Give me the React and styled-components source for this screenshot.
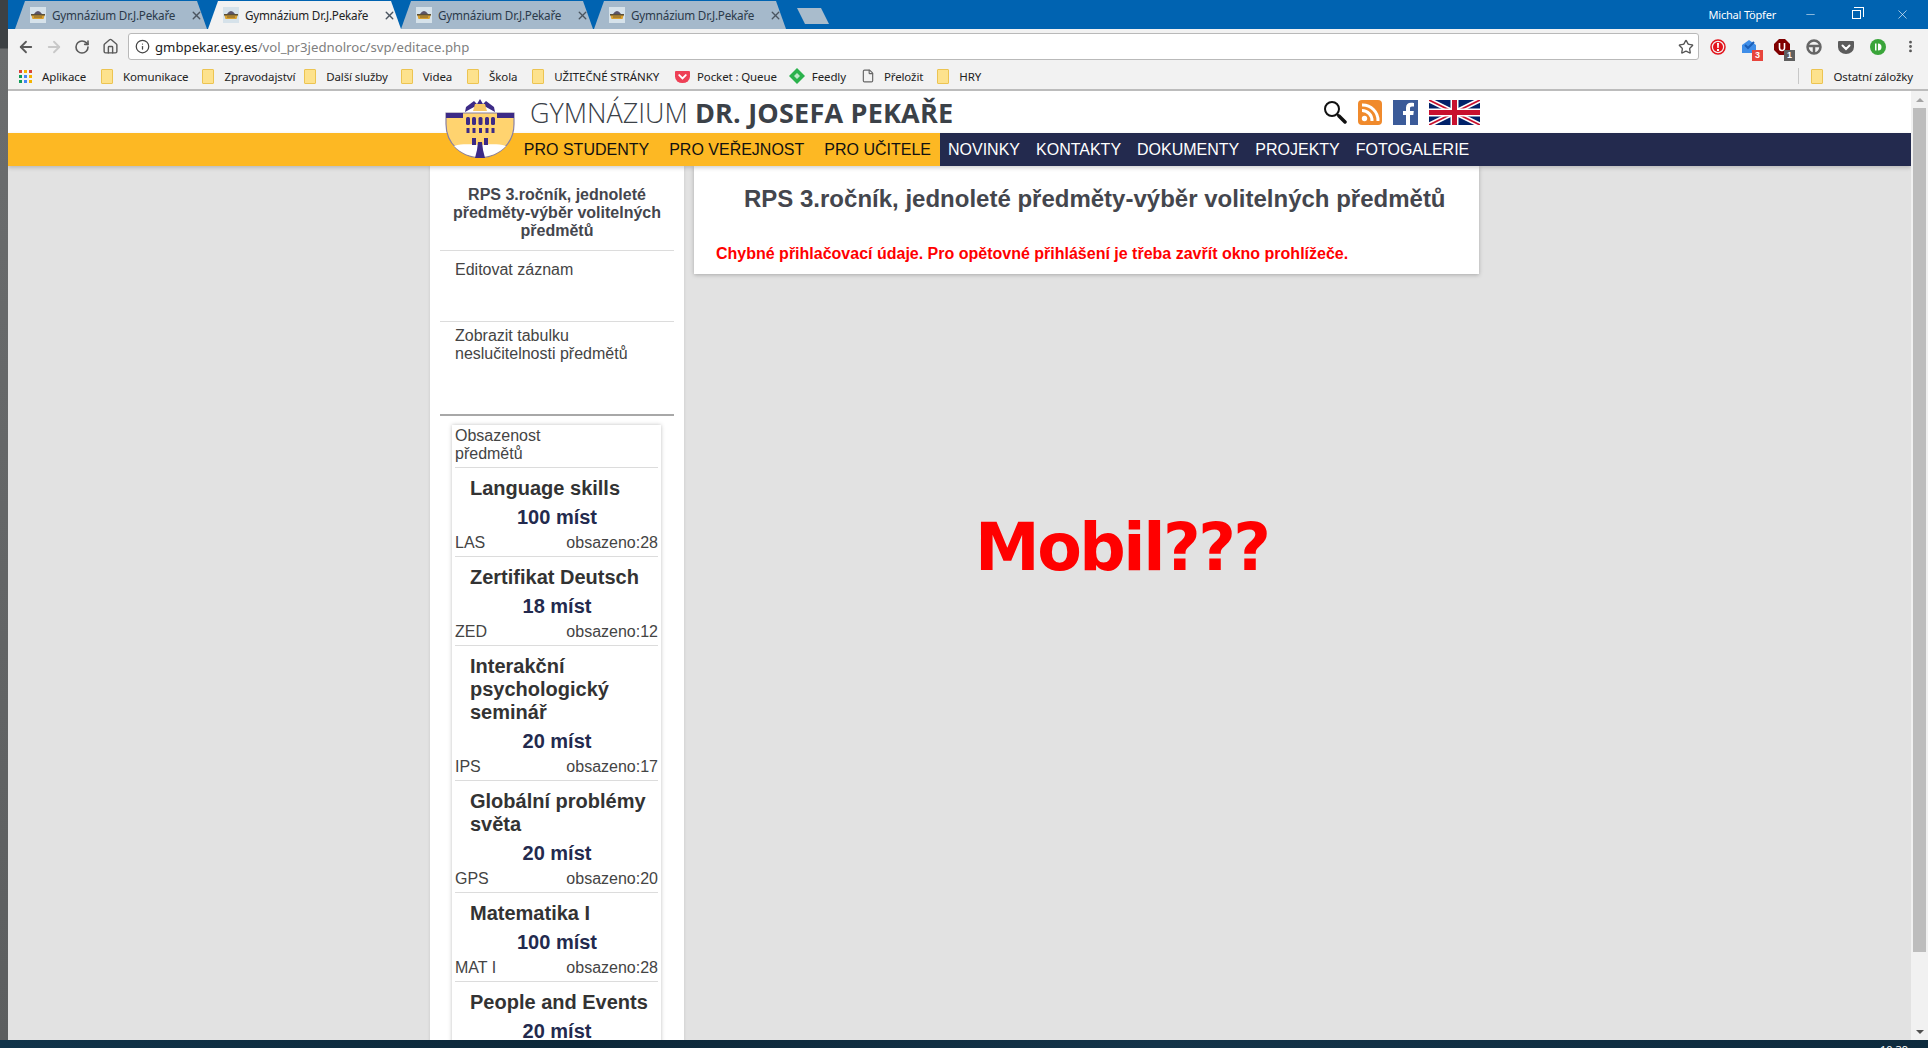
import React from "react";
import styled, { createGlobalStyle } from "styled-components";
import {
  ArrowLeft,
  ArrowRight,
  RotateCw,
  Home,
  Info,
  Star,
  X,
  Minus,
  MoreVertical,
  File,
} from "lucide-react";

const GlobalStyle = createGlobalStyle`
  html, body {
    margin: 0;
    padding: 0;
    height: 100%;
    overflow: hidden;
    background: #0d2a3d;
  }
  * { box-sizing: border-box; }
`;

const Desktop = styled.div`
  width: 1928px;
  height: 1048px;
  display: flex;
  flex-direction: column;
  overflow: hidden;
`;

const WindowRow = styled.div`
  height: 1040px;
  display: flex;
`;

const LeftStrip = styled.div`
  width: 8px;
  background: linear-gradient(#3d4144 0, #3d4144 48px, #6b6d6e 49px, #5c5e5f 100%);
`;

const BrowserWindow = styled.div`
  flex: 1;
  min-width: 0;
  display: flex;
  flex-direction: column;
`;

const TitleBar = styled.div`
  height: 29px;
  background: #0063b1;
  display: flex;
  align-items: flex-end;
  padding-left: 7px;
`;

const Tabs = styled.div`
  display: flex;
  flex: 1;
  align-items: flex-end;
`;

const Tab = styled.div`
  position: relative;
  width: 193px;
  height: 28px;
  display: flex;
  align-items: center;
  padding: 0 5px 0 15px;
  font: 11.7px "Noto Sans", sans-serif;
  color: ${(p) => (p.$active ? "#222" : "#2b3a4a")};
  z-index: ${(p) => (p.$active ? 2 : 1)};
  &::before {
    content: "";
    position: absolute;
    inset: 0 ${(p) => (p.$active ? "0" : "1px")} 0 0;
    background: ${(p) => (p.$active ? "#f2f2f2" : "#a5b9cb")};
    clip-path: polygon(0 100%, 10px 0, calc(100% - 10px) 0, 100% 100%);
    z-index: -1;
  }
`;

const TabTitle = styled.span`
  flex: 1;
  margin-left: 6px;
  white-space: nowrap;
  letter-spacing: -0.2px;
`;

const NewTab = styled.div`
  width: 32px;
  height: 16px;
  margin: 0 0 5px 10px;
  background: #a9bccc;
  clip-path: polygon(0 0, 75% 0, 100% 100%, 25% 100%);
`;

const WindowControls = styled.div`
  display: flex;
  align-items: center;
  align-self: flex-start;
  height: 28px;
  padding-right: 3px;
  color: #fff;
`;

const UserName = styled.span`
  font: 11px "Noto Sans", sans-serif;
  margin-right: 11px;
  letter-spacing: -0.2px;
`;

const WinButton = styled.span`
  width: 46px;
  display: flex;
  justify-content: center;
  align-items: center;
`;

const RestoreIcon = styled.span`
  position: relative;
  width: 9px;
  height: 9px;
  border: 1px solid #fff;
  &::after {
    content: "";
    position: absolute;
    left: 1px;
    top: -4px;
    width: 9px;
    height: 9px;
    border: 1px solid #fff;
    border-left: 0;
    border-bottom: 0;
  }
`;

const Toolbar = styled.div`
  height: 34px;
  padding: 1px 0 0 4px;
  background: #f2f2f2;
  display: flex;
  align-items: center;
`;

const NavButton = styled.span`
  width: 28px;
  display: flex;
  justify-content: center;
  color: ${(p) => (p.$disabled ? "#c8c8c8" : "#5a5a5a")};
`;

const AddressBar = styled.div`
  width: 1571px;
  height: 27px;
  margin-left: 4px;
  background: #fff;
  border: 1px solid #b9b9b9;
  border-radius: 3px;
  display: flex;
  align-items: center;
  padding: 0 4px 0 6px;
  font: 13.2px "Noto Sans", sans-serif;
  color: #222;
`;

const UrlText = styled.span`
  flex: 1;
  margin-left: 5px;
  white-space: nowrap;
`;

const UrlPath = styled.span`
  color: #808080;
`;

const Extensions = styled.div`
  flex: 1;
  display: flex;
  align-items: center;
  padding-left: 3px;
`;

const ExtSlot = styled.span`
  position: relative;
  width: 32px;
  height: 24px;
  display: flex;
  align-items: center;
  justify-content: center;
`;

const ExtBadge = styled.span`
  position: absolute;
  right: ${(p) => p.$right || 0}px;
  bottom: -2px;
  width: 11px;
  height: 11px;
  background: ${(p) => p.$bg};
  color: #fff;
  font: bold 9px/11px "Liberation Sans", sans-serif;
  text-align: center;
`;

const Bookmarks = styled.div`
  height: 28px;
  background: #f2f2f2;
  border-bottom: 2px solid #bcbcbc;
  display: flex;
  align-items: center;
  padding-left: 11px;
  font: 11.5px "Noto Sans", sans-serif;
  color: #222;
`;

const Bookmark = styled.span`
  display: flex;
  align-items: center;
  gap: ${(p) => p.$gap || 10}px;
  margin-right: ${(p) => p.$mr || 12}px;
  white-space: nowrap;
  letter-spacing: -0.12px;
`;

const FolderIcon = styled.span`
  width: 12px;
  height: 15px;
  background: #fde28d;
  border: 1px solid #ecc452;
  border-radius: 1px;
`;

const BookmarkSpacer = styled.span`
  flex: 1;
`;

const BookmarkDivider = styled.span`
  width: 1px;
  height: 16px;
  background: #c8c8c8;
  margin-right: 12px;
`;

const PageRow = styled.div`
  flex: 1;
  min-height: 0;
  display: flex;
`;

const Page = styled.div`
  flex: 1;
  min-width: 0;
  background: #e2e2e2;
  display: flex;
  flex-direction: column;
  position: relative;
  overflow: hidden;
`;

const PageHeader = styled.div`
  height: 42px;
  background: #fff;
  flex: none;
  display: flex;
  align-items: center;
  padding-left: 522px;
`;

const SiteName = styled.div`
  width: 793px;
  font: 300 27px "Open Sans", sans-serif;
  color: #3b4148;
  white-space: nowrap;
  padding-top: 1px;
  strong {
    font-weight: 700;
    letter-spacing: 0.2px;
  }
`;

const HeaderIcons = styled.div`
  display: flex;
  align-items: center;
  gap: 11px;
`;

const NavBar = styled.div`
  height: 33px;
  flex: none;
  display: flex;
  font: 16px/33px "Liberation Sans", sans-serif;
  box-shadow: 0 2px 4px rgba(0, 0, 0, 0.18);
  position: relative;
  z-index: 1;
`;

const NavYellow = styled.div`
  width: 932px;
  background: #fdb823;
  color: #111;
  display: flex;
  justify-content: flex-end;
  gap: 20px;
  padding-right: 9px;
`;

const NavDark = styled.div`
  flex: 1;
  background: #232a4e;
  color: #fff;
  display: flex;
  gap: 16px;
  padding-left: 8px;
`;

const NavItem = styled.span`
  white-space: nowrap;
`;

const LogoWrap = styled.div`
  position: absolute;
  left: 437px;
  top: 7px;
  z-index: 2;
  line-height: 0;
`;

const Columns = styled.div`
  flex: 1;
  min-height: 0;
  display: flex;
  align-items: flex-start;
  padding-left: 422px;
  gap: 10px;
  font-family: "Liberation Sans", sans-serif;
`;

const Sidebar = styled.aside`
  width: 254px;
  background: #fff;
  padding: 0 10px;
  min-height: 1000px;
  box-shadow: 0 0 3px rgba(0, 0, 0, 0.12);
  flex: none;
`;

const SideTitle = styled.div`
  padding: 20px 8px 10px;
  font: bold 16px/18px "Liberation Sans", sans-serif;
  color: #44464d;
  text-align: center;
  border-bottom: 1px solid #dcdcdc;
`;

const SideLink = styled.div`
  height: ${(p) => p.$h}px;
  padding: ${(p) => p.$top}px 15px 0;
  font-size: 16px;
  line-height: 18px;
  color: #444;
  border-bottom: ${(p) => (p.$last ? "2px solid #a8a8a8" : "1px solid #dcdcdc")};
`;

const OccupancyPanel = styled.div`
  margin: 9px 13px 0 12px;
  background: #fff;
  box-shadow: 0 0 4px rgba(0, 0, 0, 0.25);
  padding: 0 3px;
`;

const OccupancyHead = styled.div`
  padding: 2px 80px 5px 0;
  height: 43px;
  font-size: 16px;
  line-height: 18px;
  color: #444;
  border-bottom: 1px solid #dcdcdc;
`;

const Course = styled.div`
  border-bottom: 1px solid #dcdcdc;
  padding-top: 9px;
`;

const CourseName = styled.div`
  padding-left: 15px;
  font: bold 20px/23px "Liberation Sans", sans-serif;
  color: #333;
`;

const Capacity = styled.div`
  margin-top: 6px;
  padding-left: 1px;
  text-align: center;
  font: bold 20px/23px "Liberation Sans", sans-serif;
  color: #232a4e;
`;

const CourseMeta = styled.div`
  display: flex;
  justify-content: space-between;
  margin-top: 5px;
  padding-bottom: 4px;
  font-size: 16px;
  line-height: 18px;
  color: #444;
`;

const MainColumn = styled.main`
  flex: 1;
  min-width: 0;
  display: flex;
  flex-direction: column;
`;

const Card = styled.section`
  width: 785px;
  height: 108px;
  background: #fff;
  box-shadow: 0 1px 4px rgba(0, 0, 0, 0.25);
  padding: 20px 0 0 22px;
`;

const CardTitle = styled.h1`
  margin: 0;
  padding-left: 28px;
  font: bold 24px/26px "Liberation Sans", sans-serif;
  color: #44464d;
  white-space: nowrap;
`;

const ErrorText = styled.p`
  margin: 33px 0 0;
  font: bold 16px/18px "Liberation Sans", sans-serif;
  color: #f00;
  white-space: nowrap;
`;

const MobileNote = styled.div`
  margin: 234px 0 0 281px;
  font: bold 65px/80px "DejaVu Sans", sans-serif;
  letter-spacing: -2.5px;
  color: #f00;
  white-space: nowrap;
`;

const Scrollbar = styled.div`
  width: 17px;
  background: #f1f1f1;
  display: flex;
  flex-direction: column;
  align-items: center;
  padding: 0 2px;
`;

const ScrollArrow = styled.span`
  height: 17px;
  flex: none;
  display: flex;
  align-items: center;
  justify-content: center;
  &::after {
    content: "";
    border-left: 4px solid transparent;
    border-right: 4px solid transparent;
    ${(p) => (p.$up ? "border-bottom: 4px solid #a3a3a3;" : "border-top: 4px solid #505050;")}
  }
`;

const ScrollThumb = styled.div`
  width: 13px;
  height: 844px;
  background: #bdbdbd;
  flex: none;
`;

const ScrollTrack = styled.div`
  flex: 1;
`;

const Taskbar = styled.div`
  height: 8px;
  background: linear-gradient(90deg, #11344a, #0c2738 30%, #143449 60%, #0d2a3d);
  display: flex;
  justify-content: flex-end;
  overflow: hidden;
  font: 11px/14px "Noto Sans", sans-serif;
  color: #fff;
  padding: 3px 20px 0 0;
`;

function Crest({ size = 16 }) {
  return (
    <svg width={size} height={size} viewBox="0 0 16 16">
      <rect width="16" height="16" fill="#d6e2ea" />
      <path d="M1 7h14l-1.500 5h-11z" fill="#d9a02e" />
      <path d="M4 7q4-6 8 0z" fill="#5b5468" />
      <rect x="1" y="7" width="14" height="1.500" fill="#5b4f38" />
      <rect x="4" y="9.500" width="8" height="1" fill="#7a6030" />
    </svg>
  );
}

function Logo() {
  return (
    <svg width="70" height="60" viewBox="0 0 70 60">
      <path d="M1 15H69V26C69 46 53 59.500 35 59.500S1 46 1 26Z" fill="#ffd36f" stroke="#8a80a0" strokeWidth="1.200" />
      <path d="M9 48C20 45 28 47 35 47S50 45 61 48C54 55 45 59 35 59S16 55 9 48Z" fill="#fff" />
      <path d="M1 15H18V20H1ZM52 15H69V20H52Z" fill="#3c2a86" />
      <path d="M20 14L21 9L29 3L32 6L35 1L38 6L41 3L49 9L50 14L41 9H29Z" fill="#3c2a86" />
      <path d="M30 6H40L42 13H28Z" fill="#f6c766" />
      {[21, 27, 33.500, 40, 46].map((x) => (
        <rect key={x} x={x} y="19" width="4" height="8" rx="1.500" fill="#3c2a86" />
      ))}
      {[21.500, 27.500, 34, 40.500, 46.500].map((x) => (
        <rect key={x} x={x} y="30" width="3" height="5" fill="#3c2a86" />
      ))}
      <path d="M27 40h4v7h-4zM39 40h4v7h-4z" fill="#3c2a86" />
      <path d="M33 44h4l1 8 2 8H30l2-8z" fill="#3c2a86" />
    </svg>
  );
}

function SearchIcon() {
  return (
    <svg width="24" height="25" viewBox="0 0 24 25">
      <circle cx="9" cy="9" r="7" fill="none" stroke="#111" strokeWidth="2" />
      <path d="M14 14l2 2" stroke="#111" strokeWidth="2" />
      <path d="M16 16l6 6" stroke="#111" strokeWidth="3.500" strokeLinecap="round" />
    </svg>
  );
}

function RssIcon() {
  return (
    <svg width="24" height="25" viewBox="0 0 24 25">
      <rect width="24" height="25" rx="4" fill="#f08a2c" />
      <circle cx="6.500" cy="18.500" r="2.700" fill="#fff" />
      <path d="M4 10.500a10 10 0 0 1 10 10.500M4 5a15.500 15.500 0 0 1 16 16" fill="none" stroke="#fff" strokeWidth="3" />
    </svg>
  );
}

function FacebookIcon() {
  return (
    <svg width="25" height="25" viewBox="0 0 25 25">
      <rect width="25" height="25" fill="#3b5b99" />
      <path d="M17 25V15h3.300l.5-4H17V8.500c0-1.200.4-2 2-2h2V3c-.5 0-1.600-.2-3-.2-3 0-5 1.800-5 5V11H10v4h3v10z" fill="#fff" />
    </svg>
  );
}

function UkFlag() {
  return (
    <svg width="51" height="25" viewBox="0 0 51 25">
      <rect width="51" height="25" fill="#012169" />
      <path d="M0 0L51 25M51 0L0 25" stroke="#fff" strokeWidth="5" />
      <path d="M0 0L51 25M51 0L0 25" stroke="#c8102e" strokeWidth="1.700" />
      <path d="M25.500 0V25M0 12.500H51" stroke="#fff" strokeWidth="8" />
      <path d="M25.500 0V25M0 12.500H51" stroke="#c8102e" strokeWidth="5" />
    </svg>
  );
}

function AppsIcon() {
  const colors = ["#db4437", "#f4b400", "#db4437", "#0f9d58", "#4285f4", "#f4b400", "#0f9d58", "#4285f4", "#f4b400"];
  return (
    <svg width="13" height="13" viewBox="0 0 13 13">
      {colors.map((c, i) => (
        <rect key={i} x={(i % 3) * 5} y={Math.floor(i / 3) * 5} width="3" height="3" fill={c} />
      ))}
    </svg>
  );
}

function PocketIcon({ color = "#ee4056", size = 15 }) {
  return (
    <svg width={size} height={size} viewBox="0 0 16 16">
      <path d="M1 2h14a1 1 0 0 1 1 1v5a8 7 0 0 1-16 0V3a1 1 0 0 1 1-1z" fill={color} />
      <path d="M4.500 6.500L8 10l3.500-3.500" fill="none" stroke="#fff" strokeWidth="2" strokeLinecap="round" />
    </svg>
  );
}

function FeedlyIcon() {
  return (
    <svg width="16" height="16" viewBox="0 0 16 16">
      <path d="M8 0l8 8-8 8-8-8z" fill="#2bb24c" />
      <path d="M8 5l3 3-3 3-3-3z" fill="#fff" opacity="0.7" />
    </svg>
  );
}

const tabs = [false, true, false, false];

const courses = [
  { name: "Language skills", seats: 100, code: "LAS", taken: 28 },
  { name: "Zertifikat Deutsch", seats: 18, code: "ZED", taken: 12 },
  { name: "Interakční psychologický seminář", seats: 20, code: "IPS", taken: 17 },
  { name: "Globální problémy světa", seats: 20, code: "GPS", taken: 20 },
  { name: "Matematika I", seats: 100, code: "MAT I", taken: 28 },
  { name: "People and Events", seats: 20 },
];

const folders = [
  ["Komunikace", 14],
  ["Zpravodajství", 9],
  ["Další služby", 13],
  ["Videa", 15],
  ["Škola", 15],
  ["UŽITEČNÉ STRÁNKY", 16],
];

export default function App() {
  return (
    <Desktop>
      <GlobalStyle />
      <WindowRow>
        <LeftStrip />
        <BrowserWindow>
          <TitleBar>
            <Tabs>
              {tabs.map((active, i) => (
                <Tab key={i} $active={active}>
                  <Crest />
                  <TabTitle>Gymnázium Dr.J.Pekaře</TabTitle>
                  <X size={13} strokeWidth={2.5} color="#4a5560" />
                </Tab>
              ))}
              <NewTab />
            </Tabs>
            <WindowControls>
              <UserName>Michal Töpfer</UserName>
              <WinButton>
                <Minus size={13} strokeWidth={1} />
              </WinButton>
              <WinButton>
                <RestoreIcon />
              </WinButton>
              <WinButton>
                <X size={15} strokeWidth={1} />
              </WinButton>
            </WindowControls>
          </TitleBar>
          <Toolbar>
            <NavButton><ArrowLeft size={18} strokeWidth={2.4} /></NavButton>
            <NavButton $disabled><ArrowRight size={18} strokeWidth={2.4} /></NavButton>
            <NavButton><RotateCw size={16} strokeWidth={2.4} /></NavButton>
            <NavButton><Home size={17} strokeWidth={2} /></NavButton>
            <AddressBar>
              <Info size={15} color="#444" />
              <UrlText>
                gmbpekar.esy.es<UrlPath>/vol_pr3jednolroc/svp/editace.php</UrlPath>
              </UrlText>
              <Star size={16} color="#555" strokeWidth={2} />
            </AddressBar>
            <Extensions>
              <ExtSlot>
                <svg width="16" height="16" viewBox="0 0 16 16">
                  <circle cx="8" cy="8" r="7" fill="none" stroke="#e3141c" strokeWidth="1.500" />
                  <circle cx="8" cy="8" r="5" fill="#e3141c" />
                  <path d="M7 4h2l-.3 5H7.300zM7 10h2v2H7z" fill="#fff" />
                </svg>
              </ExtSlot>
              <ExtSlot>
                <svg width="18" height="16" viewBox="0 0 18 16">
                  <path d="M1 6l7-5 7 5v8H1z" fill="#3f8ee8" />
                  <path d="M4 6l3 3 6-6" fill="none" stroke="#1b5fb8" strokeWidth="2" />
                </svg>
                <ExtBadge $bg="#e8453c" $right={3}>3</ExtBadge>
              </ExtSlot>
              <ExtSlot>
                <svg width="16" height="16" viewBox="0 0 16 16">
                  <path d="M5 0h6l5 5v6l-5 5H5l-5-5V5z" fill="#800000" />
                  <path d="M5.500 4v5a2.500 2.500 0 0 0 5 0V4" fill="none" stroke="#fff" strokeWidth="1.600" />
                </svg>
                <ExtBadge $bg="#5f5f5f" $right={3}>1</ExtBadge>
              </ExtSlot>
              <ExtSlot>
                <svg width="16" height="16" viewBox="0 0 16 16">
                  <circle cx="8" cy="8" r="6.500" fill="none" stroke="#666" strokeWidth="2.500" />
                  <path d="M2 7h12M8 8v6" stroke="#666" strokeWidth="2.500" />
                </svg>
              </ExtSlot>
              <ExtSlot><PocketIcon color="#5c5c5c" size={16} /></ExtSlot>
              <ExtSlot>
                <svg width="16" height="16" viewBox="0 0 16 16">
                  <circle cx="8" cy="8" r="8" fill="#3aa53a" />
                  <path d="M5 4.500h1.500v7H5zM8 4.500a3.500 3.500 0 0 1 0 7z" fill="#fff" />
                </svg>
              </ExtSlot>
              <ExtSlot><MoreVertical size={15} color="#555" strokeWidth={2.5} /></ExtSlot>
            </Extensions>
          </Toolbar>
          <Bookmarks>
            <Bookmark $gap={10} $mr={15}><AppsIcon />Aplikace</Bookmark>
            {folders.map(([label, mr]) => (
              <Bookmark key={label} $mr={mr}><FolderIcon />{label}</Bookmark>
            ))}
            <Bookmark $gap={7} $mr={12}><PocketIcon />Pocket : Queue</Bookmark>
            <Bookmark $gap={7} $mr={15}><FeedlyIcon />Feedly</Bookmark>
            <Bookmark $gap={9} $mr={14}><File size={14} color="#666" />Přeložit</Bookmark>
            <Bookmark><FolderIcon />HRY</Bookmark>
            <BookmarkSpacer />
            <BookmarkDivider />
            <Bookmark $mr={15}><FolderIcon />Ostatní záložky</Bookmark>
          </Bookmarks>
          <PageRow>
            <Page>
              <PageHeader>
                <SiteName>GYMNÁZIUM <strong>DR. JOSEFA PEKAŘE</strong></SiteName>
                <HeaderIcons>
                  <SearchIcon />
                  <RssIcon />
                  <FacebookIcon />
                  <UkFlag />
                </HeaderIcons>
              </PageHeader>
              <LogoWrap><Logo /></LogoWrap>
              <NavBar>
                <NavYellow>
                  <NavItem>PRO STUDENTY</NavItem>
                  <NavItem>PRO VEŘEJNOST</NavItem>
                  <NavItem>PRO UČITELE</NavItem>
                </NavYellow>
                <NavDark>
                  <NavItem>NOVINKY</NavItem>
                  <NavItem>KONTAKTY</NavItem>
                  <NavItem>DOKUMENTY</NavItem>
                  <NavItem>PROJEKTY</NavItem>
                  <NavItem>FOTOGALERIE</NavItem>
                </NavDark>
              </NavBar>
              <Columns>
                <Sidebar>
                  <SideTitle>RPS 3.ročník, jednoleté předměty-výběr volitelných předmětů</SideTitle>
                  <SideLink $h={71} $top={10}>Editovat záznam</SideLink>
                  <SideLink $h={94} $top={5} $last>Zobrazit tabulku neslučitelnosti předmětů</SideLink>
                  <OccupancyPanel>
                    <OccupancyHead>Obsazenost předmětů</OccupancyHead>
                    {courses.map((c) => (
                      <Course key={c.name}>
                        <CourseName>{c.name}</CourseName>
                        <Capacity>{c.seats} míst</Capacity>
                        {c.code && (
                          <CourseMeta>
                            <span>{c.code}</span>
                            <span>obsazeno:{c.taken}</span>
                          </CourseMeta>
                        )}
                      </Course>
                    ))}
                  </OccupancyPanel>
                </Sidebar>
                <MainColumn>
                  <Card>
                    <CardTitle>RPS 3.ročník, jednoleté předměty-výběr volitelných předmětů</CardTitle>
                    <ErrorText>Chybné přihlačovací údaje. Pro opětovné přihlášení je třeba zavřít okno prohlížeče.</ErrorText>
                  </Card>
                  <MobileNote>Mobil???</MobileNote>
                </MainColumn>
              </Columns>
            </Page>
            <Scrollbar>
              <ScrollArrow $up />
              <ScrollThumb />
              <ScrollTrack />
              <ScrollArrow />
            </Scrollbar>
          </PageRow>
        </BrowserWindow>
      </WindowRow>
      <Taskbar>10:39</Taskbar>
    </Desktop>
  );
}
